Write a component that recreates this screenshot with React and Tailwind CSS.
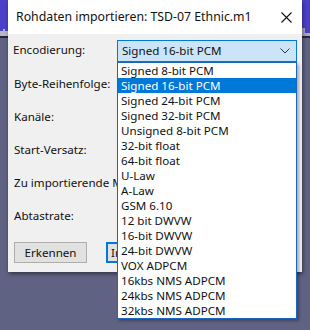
import React from "react";

const encodings = [
  "Signed 8-bit PCM",
  "Signed 16-bit PCM",
  "Signed 24-bit PCM",
  "Signed 32-bit PCM",
  "Unsigned 8-bit PCM",
  "32-bit float",
  "64-bit float",
  "U-Law",
  "A-Law",
  "GSM 6.10",
  "12 bit DWVW",
  "16-bit DWVW",
  "24-bit DWVW",
  "VOX ADPCM",
  "16kbs NMS ADPCM",
  "24kbs NMS ADPCM",
  "32kbs NMS ADPCM",
];

// die Liste verdeckt alles rechts von x=117, daher werden die Labels dort abgeschnitten
const labels = ["Byte-Reihenfolge:", "Kanäle:", "Start-Versatz:", "Zu importierende Menge (%):", "Abtastrate:"];

function Chevron() {
  return (
    <svg width="10" height="6" viewBox="0 0 10 6" className="text-[#333]">
      <polyline points="0.5,0.5 5,5 9.5,0.5" fill="none" stroke="currentColor" strokeWidth="1" />
    </svg>
  );
}

export default function App() {
  const selected = 1;

  return (
    <div
      className="relative w-[310px] h-[330px] overflow-hidden bg-[#5f6282] text-[11.6px] text-[#111]"
      style={{ fontFamily: '"Noto Sans", "Open Sans", sans-serif' }}
    >
      {/* Desktop hinter dem Dialog */}
      <div className="absolute inset-x-0 top-0 h-[36px] bg-[#4b41c8]">
        <svg width="310" height="36" viewBox="0 0 310 36" className="absolute bottom-0 left-0">
          <path d="M0 36 L0 31 L3 31 L3 29 L5 29 L5 31 L8 31 L8 36 Z" fill="#b9b6c8" />
          <path
            d="M296 36 L296 30 L298 30 L298 26 L300 26 L300 20 L302 20 L302 28 L305 28 L305 33 L310 33 L310 36 Z"
            fill="#a9a7b8"
          />
        </svg>
      </div>
      <div className="absolute inset-x-0 top-[36px] h-[2px] bg-[#26263a]" />

      {/* Dialog */}
      <div className="absolute left-[8px] top-0 w-[294px] h-[272px] bg-[#f0f0f0] shadow-[1px_2px_4px_rgba(0,0,0,0.45)] flex flex-col">
        <div className="h-[34px] bg-white flex items-center justify-between pl-[8px] pr-[10px]">
          <span className="text-[12.3px]">Rohdaten importieren: TSD-07 Ethnic.m1</span>
          <svg width="11" height="11" viewBox="0 0 11 11">
            <path d="M0.5 0.5 L10.5 10.5 M10.5 0.5 L0.5 10.5" stroke="#111" strokeWidth="1.1" />
          </svg>
        </div>

        <div className="flex flex-col gap-[11px] pt-[6px] pl-[5px] pr-[5px]">
          <div className="flex items-center h-[22px]">
            <span className="w-[104px] -mt-[2px]">Encodierung:</span>
            <div className="flex-1 h-[22px] border border-[#0078d7] bg-[#cce4f7] flex items-center justify-between pl-[4px] pr-[6px]">
              <span>{encodings[selected]}</span>
              <Chevron />
            </div>
          </div>
          {labels.map((l) => (
            <div key={l} className="flex items-center h-[22px]">
              <span className="w-[104px] pl-[1px] whitespace-nowrap overflow-hidden">{l}</span>
            </div>
          ))}
        </div>

        <div className="flex gap-[19px] pl-[6px] mt-[15px]">
          <button className="w-[73px] h-[21px] bg-[#e1e1e1] border border-[#adadad]">Erkennen</button>
          <button className="w-[12px] h-[21px] bg-[#e1e1e1] border-2 border-r-0 border-[#0078d7] overflow-hidden whitespace-nowrap text-left pl-[3px]">
            Importieren
          </button>
        </div>
      </div>

      {/* Aufgeklappte Liste */}
      <div className="absolute left-[117px] top-[62px] w-[180px] border border-[#1a67c0] bg-white shadow-[2px_2px_3px_rgba(0,0,0,0.3)] flex flex-col">
        {encodings.map((e, i) => (
          <div
            key={e}
            className={
              i === selected
                ? "h-[15px] leading-[15px] pl-[3px] bg-[#0078d7] text-white"
                : "h-[15px] leading-[15px] pl-[3px]"
            }
          >
            {e}
          </div>
        ))}
      </div>
    </div>
  );
}
